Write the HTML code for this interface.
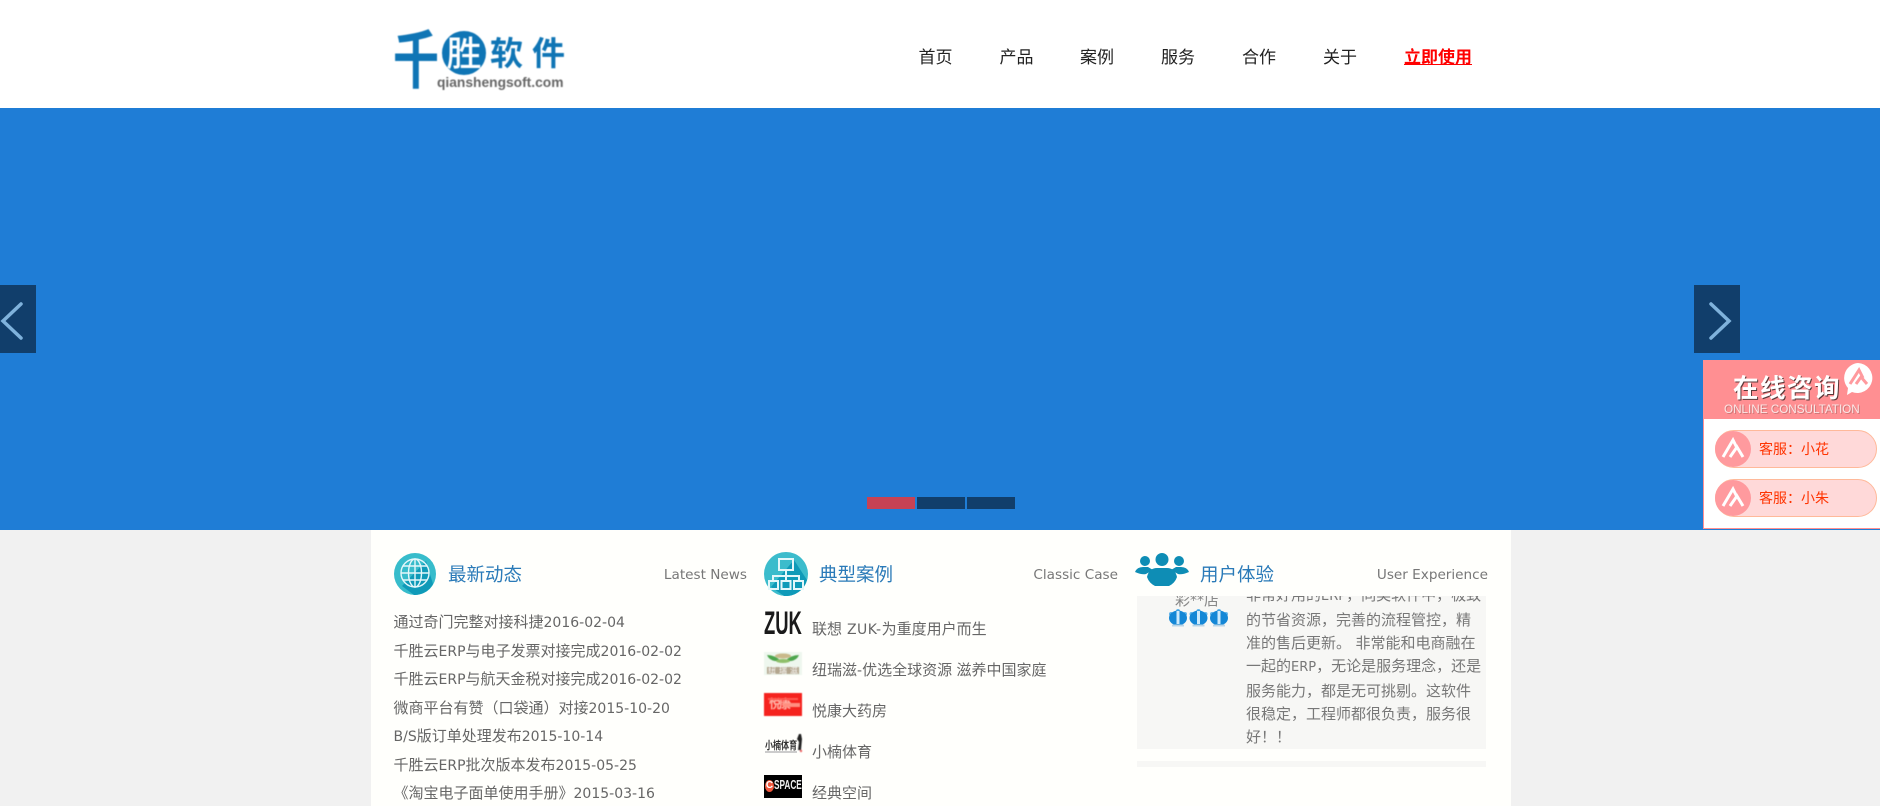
<!DOCTYPE html>
<html lang="zh"><head><meta charset="utf-8"><title>千胜软件</title>
<style>
html,body{margin:0;padding:0;width:1880px;height:806px;overflow:hidden;background:#f1f1f1}
body{position:relative;font-family:"Liberation Sans","Noto Sans CJK SC",sans-serif;font-size:14px;color:#666}
.a{position:absolute;white-space:nowrap}
.s{font-family:"Noto Sans CJK SC",sans-serif}
i{font-style:normal;font-family:"DejaVu Sans",sans-serif;font-size:14px}
.nav{top:44px;font-size:17px;line-height:24px;color:#222;font-family:"Noto Sans CJK SC",sans-serif}
.t{font-size:18.500px;line-height:26px;color:#2a7ab8;font-family:"Noto Sans CJK SC",sans-serif;top:561px}
.e{font-size:13.600px;line-height:20px;color:#777;font-family:"DejaVu Sans",sans-serif;top:565px;text-align:right}
.l{left:393.500px;font-size:15px;line-height:20px;color:#666;font-family:"Noto Sans CJK SC",sans-serif}
.c{left:812px;font-size:15px;line-height:20px;color:#666;font-family:"Noto Sans CJK SC",sans-serif}
.pill{left:1715px;width:160px;height:36px;border:1px solid #ffb99a;border-radius:19px;background:#ffd9d9}
.av{left:1715px;width:36px;height:36px;border-radius:50%;background:#ff9a9e}
.pt{left:1759px;font-size:14px;line-height:20px;color:#ff3300;font-family:"Noto Sans CJK SC",sans-serif}
</style></head><body>
<div class="a" style="left:0;top:0;width:1880px;height:108px;background:#fff"></div>

<svg class="a" style="left:390px;top:25px;filter:blur(.4px)" width="185" height="70" viewBox="0 0 185 70">
<text transform="translate(3,58) scale(1,1.38)" font-size="46" font-weight="700" fill="#0f75b5" font-family="Noto Sans CJK SC">千</text>
<circle cx="74" cy="28" r="22" fill="#0f75b5"/>
<text x="74" y="41" font-size="35" font-weight="500" text-anchor="middle" fill="#fff" font-family="Noto Sans CJK SC">胜</text>
<text x="100" y="40" font-size="33" font-weight="700" fill="#0f75b5" font-family="Noto Sans CJK SC">软</text>
<text x="142" y="40" font-size="33" font-weight="700" fill="#0f75b5" font-family="Noto Sans CJK SC">件</text>
<text x="47" y="62" font-size="13.800" font-weight="700" fill="#666" font-family="Liberation Sans">qianshengsoft.com</text>
</svg>

<div class="a nav" style="left:918.500px">首页</div>
<div class="a nav" style="left:999.500px">产品</div>
<div class="a nav" style="left:1080px">案例</div>
<div class="a nav" style="left:1161px">服务</div>
<div class="a nav" style="left:1242px">合作</div>
<div class="a nav" style="left:1323px">关于</div>
<div class="a nav" style="left:1404px;color:#f00;font-weight:700;text-decoration:underline">立即使用</div>

<div class="a" style="left:0;top:108px;width:1880px;height:422px;background:#1f7dd6"></div>
<div class="a" style="left:0;top:285px;width:36px;height:68px;background:#113e6b"></div>
<svg class="a" style="left:0;top:285px" width="36" height="68"><path d="M21 19 3 36l18 17" fill="none" stroke="#7fb2dc" stroke-width="3.500" stroke-linecap="round"/></svg>
<div class="a" style="left:1694px;top:285px;width:46px;height:68px;background:#113e6b"></div>
<svg class="a" style="left:1694px;top:285px" width="46" height="68"><path d="M17 19 35 36 17 53" fill="none" stroke="#7fb2dc" stroke-width="3.500" stroke-linecap="round"/></svg>
<div class="a" style="left:867px;top:497px;width:48px;height:12px;background:#c74254"></div>
<div class="a" style="left:917px;top:497px;width:48px;height:12px;background:#113e6b"></div>
<div class="a" style="left:967px;top:497px;width:48px;height:12px;background:#113e6b"></div>

<div class="a" style="left:1703px;top:360px;width:177px;height:169px;background:#fff;box-sizing:border-box;border:1px solid #ff8f92;border-right:0"></div>
<div class="a" style="left:1703px;top:360px;width:177px;height:59px;background:#ff8f92"></div>
<div class="a s" style="left:1733px;top:370px;font-size:25.500px;line-height:34px;letter-spacing:1.500px;font-weight:700;color:#fff;text-shadow:1px 1px 0 #5a3a3a">在线咨询</div>
<div class="a" style="left:1724px;top:403px;font-size:11.700px;line-height:13px;color:#fbe6e6;text-shadow:1px 1px 0 #c77">ONLINE CONSULTATION</div>
<svg class="a" style="left:1842px;top:362px" width="34" height="36">
<path d="M16 1a15 15 0 1 1-6 29l-5 3 1-7A15 15 0 0 1 16 1z" fill="#fff"/>
<path d="M8 22 17 8l4 8m-7 6 5-7 6 7" fill="none" stroke="#ff9a9e" stroke-width="3"/></svg>

<div class="a pill" style="top:430px"></div>
<div class="a av" style="top:431px"></div>
<svg class="a" style="left:1715px;top:431px" width="36" height="36"><path d="M8 26 18 9l4 8m-7 9 7-10 6 10" fill="none" stroke="#fff" stroke-width="3"/></svg>
<div class="a pt" style="top:439px">客服：小花</div>
<div class="a pill" style="top:479px"></div>
<div class="a av" style="top:480px"></div>
<svg class="a" style="left:1715px;top:480px" width="36" height="36"><path d="M8 26 18 9l4 8m-7 9 7-10 6 10" fill="none" stroke="#fff" stroke-width="3"/></svg>
<div class="a pt" style="top:488px">客服：小朱</div>

<div class="a" style="left:371px;top:530px;width:1140px;height:276px;background:#fffffc"></div>

<svg class="a" style="left:394px;top:553px" width="42" height="42" viewBox="0 0 42 42">
<circle cx="21" cy="21" r="21" fill="#37bccb"/>
<path d="M32 8 39 31A21 21 0 0 1 20 42L8 33z" fill="#0f9ab8"/>
<g fill="none" stroke="#e4f7fa" stroke-width="1.400"><circle cx="21" cy="20" r="14"/><ellipse cx="21" cy="20" rx="6.500" ry="14"/><path d="M21 6v28M7 20h28M9 13h24M9 27h24"/></g></svg>
<div class="a t" style="left:448px">最新动态</div>
<div class="a e" style="left:647px;width:100px">Latest News</div>
<div class="a l" style="top:612px">通过奇门完整对接科捷<i>2016-02-04</i></div>
<div class="a l" style="top:641px">千胜云<i>ERP</i>与电子发票对接完成<i>2016-02-02</i></div>
<div class="a l" style="top:669px">千胜云<i>ERP</i>与航天金税对接完成<i>2016-02-02</i></div>
<div class="a l" style="top:698px">微商平台有赞（口袋通）对接<i>2015-10-20</i></div>
<div class="a l" style="top:726px"><i>B/S</i>版订单处理发布<i>2015-10-14</i></div>
<div class="a l" style="top:755px">千胜云<i>ERP</i>批次版本发布<i>2015-05-25</i></div>
<div class="a l" style="top:783px">《淘宝电子面单使用手册》<i>2015-03-16</i></div>

<svg class="a" style="left:764px;top:552px" width="44" height="44" viewBox="0 0 44 44">
<circle cx="22" cy="22" r="22" fill="#3cbccc"/>
<path d="M30 8 43 28A22 22 0 0 1 20 44L7 35z" fill="#0f9ab8"/>
<g fill="none" stroke="#e4f7fa" stroke-width="2"><rect x="15" y="7" width="14" height="11"/><path d="M22 18v6M9 29v-5h26v5M22 24v5"/><rect x="5" y="29" width="9" height="8"/><rect x="17.500" y="29" width="9" height="8"/><rect x="30" y="29" width="9" height="8"/></g></svg>
<div class="a t" style="left:819px">典型案例</div>
<div class="a e" style="left:1018px;width:100px">Classic Case</div>

<div class="a" style="left:764px;top:611px;width:38px;height:23px;overflow:hidden;background:#fffffc"><div class="a" style="left:0;top:-4px;font-size:32px;line-height:32px;font-weight:700;color:#1a1a1a;transform:scaleX(.575);transform-origin:0 0">ZUK</div></div>

<div class="a" style="left:764px;top:652px;width:38px;height:23px;background:#eef7ee;overflow:hidden;filter:blur(.4px)">
<svg class="a" style="left:0;top:0" width="38" height="14"><path d="M3 3q8 0 14 6h-6Q5 8 3 3zM35 3q-8 0-14 6h6q6-1 8-6z" fill="#4da64d"/><ellipse cx="19" cy="4" rx="8" ry="2.500" fill="#c9b98a"/><ellipse cx="19" cy="9" rx="7" ry="2" fill="#8fbf6a"/></svg>
<div class="a" style="left:3px;top:15px;width:32px;height:7px;background:#b3a68e"></div>
<div class="a s" style="left:4px;top:14px;font-size:8px;line-height:9px;letter-spacing:3px;color:#fff">纽瑞滋</div></div>

<div class="a" style="left:764px;top:693px;width:38px;height:23px;background:#f5231e;overflow:hidden;filter:blur(.5px)"><div class="a s" style="left:5px;top:2px;font-size:12px;line-height:18px;letter-spacing:-2px;font-weight:700;color:#ffb5a8">悦康</div><div class="a" style="left:19px;top:10px;width:17px;height:4px;background:#ff8f80"></div><div class="a" style="left:4px;top:5px;width:30px;height:2px;background:#ff5a50"></div></div>

<div class="a s" style="left:765px;top:738px;font-size:11px;line-height:14px;font-weight:700;color:#333;transform:scaleX(.73);transform-origin:0 0;filter:blur(.3px)">小楠体育</div>
<svg class="a" style="left:796px;top:733px;filter:blur(.4px)" width="7" height="21"><path d="M3 1h2l1 5-1 11H2l1-8-2-3z" fill="#222"/><circle cx="5" cy="18" r="1.200" fill="#e66"/></svg>
<div class="a" style="left:765px;top:751px;width:32px;height:2px;background:#ccc"></div>

<div class="a" style="left:764px;top:775px;width:38px;height:23px;background:#000;overflow:hidden"><div class="a" style="left:1px;top:5px;width:9px;height:12px;border-radius:50%;background:#f0573c;color:#fff;font-size:10px;line-height:12px;font-weight:700;text-align:center">C</div><div class="a" style="left:10px;top:3px;font-size:12.500px;line-height:15px;font-weight:700;color:#eee;transform:scaleX(.66);transform-origin:0 0">SPACE</div></div>

<div class="a c" style="top:619px">联想<i style="letter-spacing:.5px"> ZUK-</i>为重度用户而生</div>
<div class="a c" style="top:660px">纽瑞滋<i>-</i>优选全球资源<i> </i>滋养中国家庭</div>
<div class="a c" style="top:701px">悦康大药房</div>
<div class="a c" style="top:742px">小楠体育</div>
<div class="a c" style="top:783px">经典空间</div>

<svg class="a" style="left:1135px;top:553px" width="54" height="34" viewBox="0 0 54 34" fill="#0e8db5">
<circle cx="10" cy="8" r="5"/><circle cx="44" cy="8" r="5"/><circle cx="27" cy="6.500" r="6.500"/>
<path d="M0 19q2-5 8-5h5l5 3-7 4q-4 1-11-2zM54 19q-2-5-8-5h-5l-5 3 7 4q4 1 11-2z"/>
<path d="M12 24q2-9 10-9h10q8 0 10 9-2 6-8 9H20q-6-3-8-9z"/></svg>
<div class="a t" style="left:1200px">用户体验</div>
<div class="a e" style="left:1348px;width:140px">User Experience</div>

<div class="a" style="left:1137px;top:596px;width:349px;height:153px;background:#f7f7f5;overflow:hidden">
<div class="a s" style="left:38px;top:-6px;font-size:15px;line-height:20px;color:#888">彩<i>**</i>店</div>
<div class="a" style="left:109px;top:-12px;font-size:15px;line-height:22.800px;color:#777;font-family:'Noto Sans CJK SC',sans-serif;white-space:nowrap">非常好用的<i style="font-size:13px">ERP</i>，同类软件中，极致<br>的节省资源，完善的流程管控，精<br>准的售后更新。<i> </i>非常能和电商融在<br>一起的<i style="font-size:13px">ERP</i>，无论是服务理念，还是<br>服务能力，都是无可挑剔。这软件<br>很稳定，工程师都很负责，服务很<br>好！！</div>
<svg class="a" style="left:31px;top:13px" width="62" height="19" viewBox="0 0 62 19">
<defs><g id="cr"><circle cx="3" cy="5" r="2" fill="#5fb4ea"/><circle cx="17" cy="5" r="2" fill="#5fb4ea"/><circle cx="10" cy="2" r="2" fill="#5fb4ea"/><ellipse cx="10" cy="9" rx="9" ry="7.500" fill="#1487d6"/><path d="M8.500 2h3v13h-3z" fill="#cdeafc"/><path d="M4 15.500h12v2H4z" fill="#b9d4e6"/></g></defs>
<use href="#cr"/><use href="#cr" x="20.500"/><use href="#cr" x="41"/></svg>
</div>
<div class="a" style="left:1137px;top:761px;width:349px;height:6px;background:#f7f7f5"></div>
</body></html>
